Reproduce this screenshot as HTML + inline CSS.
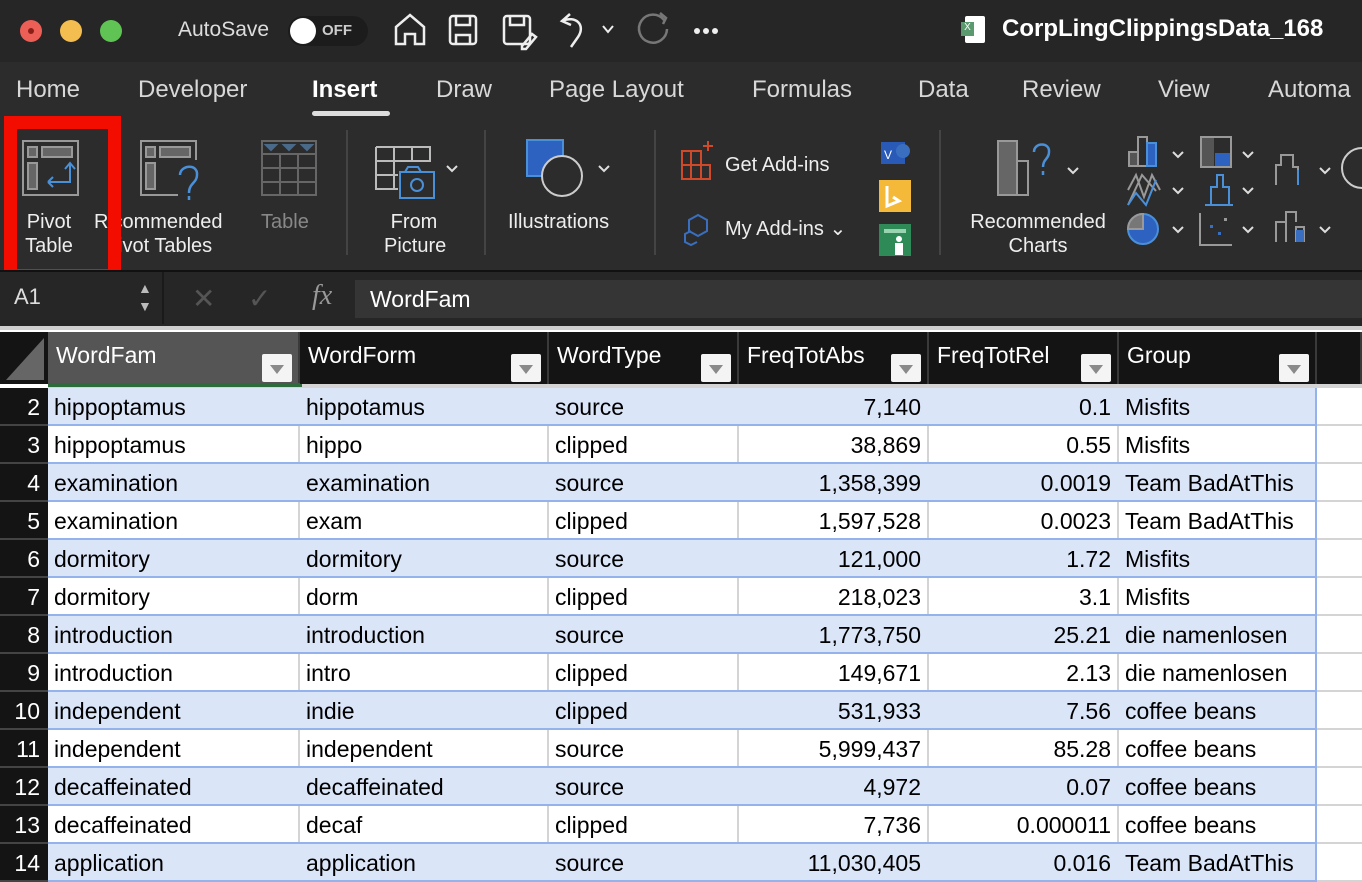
<!DOCTYPE html>
<html><head><meta charset="utf-8"><style>
*{margin:0;padding:0;box-sizing:border-box}
body{width:1362px;height:858px;overflow:hidden;background:#fff;font-family:"Liberation Sans",sans-serif;position:relative}
.a{position:absolute}
.top{left:0;top:0;width:1362px;height:62px;background:#262626}
.rib{left:0;top:62px;width:1362px;height:208px;background:#2c2c2c}
.tab{position:absolute;top:76px;color:#d8d8d8;font-size:24px}
.rt{position:absolute;color:#eee;font-size:20px;text-align:center;line-height:24px}
.fb{left:0;top:270px;width:1362px;height:56px;background:#262626;border-top:2px solid #111}
.grid{left:0;top:326px;width:1362px;height:532px;background:#fff;border-top:4px solid #cfcfcf}
.hc{position:absolute;top:332px;height:52px;background:#141414;color:#fff;font-size:23px;padding:10px 0 0 8px;border-right:2px solid #3a3a3a}
.dd{position:absolute;right:6px;bottom:2px;width:30px;height:28px;background:#f4f4f4;border-radius:2px}
.dd:after{content:"";position:absolute;left:8px;top:11px;border-left:7px solid transparent;border-right:7px solid transparent;border-top:9px solid #8a8a8a}
.rh{position:absolute;left:0;width:48px;background:#141414;color:#fff;font-size:23px;text-align:right;padding-right:8px;height:38px;line-height:38px;border-bottom:2px solid #444}
.row{position:absolute;left:48px;width:1269px;height:38px;font-size:23px;color:#000;line-height:38px;border-bottom:2px solid #94b3ec}
.c{position:absolute;top:0;height:36px;padding:0 6px;white-space:nowrap;border-right:2px solid #d4d4d4}
.r{text-align:right}
</style></head><body>
<div class="a top"></div>
<div class="a" style="left:20px;top:20px;width:22px;height:22px;border-radius:50%;background:#ec5f57"></div>
<div class="a" style="left:28px;top:28px;width:6px;height:6px;border-radius:50%;background:#8a1f18"></div>
<div class="a" style="left:60px;top:20px;width:22px;height:22px;border-radius:50%;background:#f3bd4f"></div>
<div class="a" style="left:100px;top:20px;width:22px;height:22px;border-radius:50%;background:#5fc454"></div>
<div class="a" style="left:178px;top:18px;color:#ddd;font-size:21px">AutoSave</div>
<div class="a" style="left:288px;top:16px;width:80px;height:30px;border-radius:15px;background:#1c1c1c"></div>
<div class="a" style="left:290px;top:18px;width:26px;height:26px;border-radius:50%;background:#fff"></div>
<div class="a" style="left:322px;top:22px;color:#ccc;font-size:15px;font-weight:bold">OFF</div>
<div class="a rib"></div>

<svg class="a" style="left:0;top:0" width="1362" height="270" fill="none" stroke-width="2">
<g stroke="#eee" stroke-width="2.5">
<path d="M396 44V27L410 15L424 27V44H415V34H405V44Z"/>
<rect x="450" y="16" width="26" height="28" rx="3"/><path d="M456 16v9h14V16M456 44v-9h14v9"/>
<rect x="504" y="16" width="26" height="28" rx="3"/><path d="M510 16v9h14V16M522 46l10-12 4 3-10 12h-4z"/>
<path d="M570 14l-8 7 9 4M562 21c14-6 24 4 16 16l-7 10"/>
<path d="M603 26l5 6 5-6" stroke-width="2"/>
<path d="M664 20a14 14 0 1 0 3 9M660 13l6 5-3 6" stroke="#777"/>
</g>
<circle cx="697" cy="31" r="3" fill="#eee"/><circle cx="706" cy="31" r="3" fill="#eee"/><circle cx="715" cy="31" r="3" fill="#eee"/>
<!-- pivot -->
<rect x="23" y="141" width="55" height="54" stroke="#999"/><rect x="28" y="147" width="9" height="10" fill="#666" stroke="#999"/><rect x="42" y="147" width="30" height="10" fill="#666" stroke="#999"/><rect x="28" y="163" width="9" height="26" fill="#666" stroke="#999"/>
<path d="M48 182h22V164M65 169l5-6 5 6M48 182l5-5M48 182l5 5" stroke="#4a90d9"/>
<!-- rec pivot -->
<rect x="141" y="141" width="55" height="54" stroke="#999"/><rect x="146" y="147" width="9" height="10" fill="#666" stroke="#999"/><rect x="160" y="147" width="30" height="10" fill="#666" stroke="#999"/><rect x="146" y="163" width="9" height="26" fill="#666" stroke="#999"/>
<rect x="178" y="160" width="22" height="40" fill="#2c2c2c" stroke="none"/>
<path d="M180 175c0-10 18-12 17 0c0 8-8 8-8 18M189 196v4" stroke="#4a90d9" stroke-width="2.5"/>
<!-- table -->
<rect x="262" y="141" width="54" height="54" stroke="#666"/><path d="M262 154h54M262 168h54M262 182h54M280 154v41M298 154v41" stroke="#666"/>
<path d="M266 145l5 5 5-5zM284 145l5 5 5-5zM302 145l5 5 5-5z" fill="#4a6a8a" stroke="#4a6a8a"/>
<!-- from picture -->
<path d="M376 147h54v15M376 147v42h22M376 161h54M376 175h22M394 147v42M412 147v15" stroke="#bbb"/>
<path d="M400 172h34v26h-34zM405 172l3-5h10l3 5" stroke="#4a90d9"/><circle cx="417" cy="185" r="6" stroke="#4a90d9"/>
<path d="M447 166l5 5 5-5M599 166l5 5 5-5M1068 168l5 5 5-5M1173 152l5 5 5-5M1243 152l5 5 5-5M1320 168l5 5 5-5M1173 188l5 5 5-5M1243 188l5 5 5-5M1173 227l5 5 5-5M1243 227l5 5 5-5M1320 227l5 5 5-5" stroke="#ddd"/>
<path d="M347 130v125M485 130v125M655 130v125M940 130v125" stroke="#444"/>
<!-- illustrations -->
<rect x="527" y="140" width="36" height="36" fill="#2d62c0" stroke="#4a90d9"/><circle cx="562" cy="176" r="20" fill="#2c2c2c" stroke="#ccc"/>
<!-- add-ins -->
<path d="M682 151h19v28h-19zM682 165h28v14h-9M691 151v28M703 146h10M708 141v10" stroke="#d04a2a"/>
<path d="M698 215l9 5v11l-9 5-9-5v-11zM691 231l-6 3v8l6 3 6-3" stroke="#3a6fc0"/>
<rect x="881" y="142" width="24" height="22" fill="#2a5ab8" stroke="none"/><circle cx="903" cy="151" r="7" fill="#3a6fc0"/>
<text x="884" y="159" fill="#fff" font-size="12" font-family="Liberation Sans" stroke="none">V</text>
<rect x="879" y="180" width="32" height="32" fill="#f5b93a" stroke="none"/><path d="M887 186v20l12-5-6-4" stroke="#fff" stroke-width="3"/>
<rect x="879" y="224" width="32" height="32" fill="#2e8b57" stroke="none"/><rect x="884" y="229" width="22" height="4" fill="#9ad3b0"/><circle cx="899" cy="239" r="3" fill="#fff"/><rect x="895" y="243" width="8" height="12" fill="#fff"/>
<!-- rec charts -->
<rect x="998" y="141" width="19" height="54" fill="#666" stroke="#999"/><rect x="1017" y="161" width="11" height="34" stroke="#999"/>
<path d="M1034 152c0-10 16-10 15 0c0 7-6 7-6 15M1043 171v4" stroke="#4a90d9" stroke-width="2.5"/>
<rect x="1129" y="152" width="9" height="14" fill="#555" stroke="#999"/><rect x="1138" y="137" width="9" height="29" stroke="#999"/><rect x="1147" y="143" width="9" height="23" fill="#2d62c0" stroke="#4a90d9"/>
<rect x="1201" y="137" width="30" height="30" stroke="#999"/><rect x="1202" y="138" width="12" height="28" fill="#555"/><rect x="1215" y="153" width="15" height="13" fill="#2d62c0"/>
<path d="M1128 190l8-15 8 22 8-22 8 15M1128 205l14-30 14 16" stroke="#999"/><path d="M1128 205l8-12 10 12 10-25" stroke="#4a90d9"/>
<path d="M1211 205v-18h6v-12h6v12h6v18zM1205 205h28" stroke="#4a90d9"/>
<circle cx="1143" cy="229" r="15" fill="#2d62c0" stroke="#4a90d9"/><path d="M1143 229v-15a15 15 0 0 0-15 15z" fill="#777" stroke="#999"/>
<path d="M1200 213v32h32" stroke="#999"/><rect x="1210" y="225" width="3" height="3" fill="#3a6fc0"/><rect x="1218" y="232" width="3" height="3" fill="#3a6fc0"/><rect x="1224" y="218" width="3" height="3" fill="#999"/>
<path d="M1276 185v-20h5v-10h12v12h5v18" stroke="#999"/><path d="M1298 170v15" stroke="#4a90d9"/>
<path d="M1276 242v-20h10v-10h10v10M1286 242v-20M1296 242v-15h8v15" stroke="#999"/><rect x="1296" y="230" width="8" height="12" fill="#3a6fc0"/>
<path d="M1362 148a20 20 0 0 0 0 40" stroke="#ccc"/>
</svg>
<div class="a" style="left:965px;top:16px;width:20px;height:27px;background:#fff;border-radius:2px"></div>
<div class="a" style="left:961px;top:22px;width:13px;height:14px;background:#5a9a6e;color:#fff;font-size:10px;text-align:center">X</div>
<div class="a" style="left:1002px;top:15px;color:#fff;font-size:24px;font-weight:bold;white-space:nowrap">CorpLingClippingsData_168</div>

<div class="tab" style="left:16px">Home</div>
<div class="tab" style="left:138px">Developer</div>
<div class="tab" style="left:312px;color:#fff;font-weight:bold">Insert</div>
<div class="a" style="left:312px;top:111px;width:78px;height:5px;border-radius:3px;background:#ddd"></div>
<div class="tab" style="left:436px">Draw</div>
<div class="tab" style="left:549px">Page Layout</div>
<div class="tab" style="left:752px">Formulas</div>
<div class="tab" style="left:918px">Data</div>
<div class="tab" style="left:1022px">Review</div>
<div class="tab" style="left:1158px">View</div>
<div class="tab" style="left:1268px">Automa</div>

<div class="a" style="left:4px;top:116px;width:117px;height:166px;border:13px solid #f20d00"></div>
<div class="rt" style="left:19px;top:210px;width:60px">Pivot<br>Table</div>
<div class="rt" style="left:94px;top:210px;width:150px;text-align:left">R<span style="display:inline-block;width:4px"></span>commended<br><span style="margin-left:24px">ivot Tables</span></div>
<div class="a" style="left:92px;top:232px;width:28px;height:26px;background:#2c2c2c"></div>
<div class="a" style="left:4px;top:116px;width:117px;height:166px;border:13px solid #f20d00"></div>
<div class="rt" style="left:261px;top:210px;color:#888">Table</div>
<div class="rt" style="left:384px;top:210px;width:60px">From<br>Picture</div>
<div class="rt" style="left:508px;top:210px">Illustrations</div>
<div class="rt" style="left:725px;top:153px">Get Add-ins</div>
<div class="rt" style="left:725px;top:217px">My Add-ins &#8964;</div>
<div class="rt" style="left:962px;top:210px;width:152px">Recommended<br>Charts</div>

<div class="a fb"></div>
<div class="a" style="left:14px;top:284px;color:#ddd;font-size:22px">A1</div>
<div class="a" style="left:138px;top:279px;color:#bbb;font-size:14px;line-height:18px">▲<br>▼</div>
<div class="a" style="left:162px;top:272px;width:2px;height:52px;background:#1a1a1a"></div>
<div class="a" style="left:192px;top:282px;color:#555;font-size:28px">✕</div>
<div class="a" style="left:248px;top:282px;color:#555;font-size:28px">✓</div>
<div class="a" style="left:312px;top:280px;color:#999;font-size:28px;font-style:italic;font-family:'Liberation Serif',serif">fx</div>
<div class="a" style="left:355px;top:280px;width:1007px;height:38px;background:#353535;color:#fff;font-size:23px;padding:6px 15px">WordFam</div>

<div class="a grid"></div>
<div class="a" style="left:0;top:332px;width:48px;height:52px;background:#141414"></div>
<svg class="a" style="left:4px;top:336px" width="42" height="46"><path d="M40 2V44H2Z" fill="#666"/></svg>
<div class="a" style="left:48px;top:384px;width:1314px;height:4px;background:#d4d4d4"></div>
<div class="hc" style="left:48px;width:252px;background:#555">WordFam<span class="dd"></span></div>
<div class="a" style="left:48px;top:383px;width:254px;height:4px;background:#2e6b3c"></div>
<div class="hc" style="left:300px;width:249px">WordForm<span class="dd"></span></div>
<div class="hc" style="left:549px;width:190px">WordType<span class="dd"></span></div>
<div class="hc" style="left:739px;width:190px">FreqTotAbs<span class="dd"></span></div>
<div class="hc" style="left:929px;width:190px">FreqTotRel<span class="dd"></span></div>
<div class="hc" style="left:1119px;width:198px">Group<span class="dd"></span></div>
<div class="hc" style="left:1317px;width:45px"></div>

<div id="rows"></div>
<script>
var d=[["hippoptamus","hippotamus","source","7,140","0.1","Misfits"],["hippoptamus","hippo","clipped","38,869","0.55","Misfits"],["examination","examination","source","1,358,399","0.0019","Team BadAtThis"],["examination","exam","clipped","1,597,528","0.0023","Team BadAtThis"],["dormitory","dormitory","source","121,000","1.72","Misfits"],["dormitory","dorm","clipped","218,023","3.1","Misfits"],["introduction","introduction","source","1,773,750","25.21","die namenlosen"],["introduction","intro","clipped","149,671","2.13","die namenlosen"],["independent","indie","clipped","531,933","7.56","coffee beans"],["independent","independent","source","5,999,437","85.28","coffee beans"],["decaffeinated","decaffeinated","source","4,972","0.07","coffee beans"],["decaffeinated","decaf","clipped","7,736","0.000011","coffee beans"],["application","application","source","11,030,405","0.016","Team BadAtThis"]];
var L=[0,252,501,691,881,1071],W=[252,249,190,190,190,198],h="";
d.forEach(function(r,i){var y=388+i*38;
h+='<div class="rh" style="top:'+y+'px">'+(i+2)+'</div><div class="row" style="top:'+y+'px;background:'+(i%2?'#fff':'#dae5f8')+'">';
r.forEach(function(t,j){h+='<div class="c'+(j==3||j==4?' r':'')+'" style="left:'+L[j]+'px;width:'+W[j]+'px;'+(i%2?'':'border-right-color:transparent;')+(j==5?'border-right:2px solid #94b3ec':'')+'">'+t+'</div>'});
h+='</div><div class="a" style="left:1317px;top:'+y+'px;width:45px;height:38px;border-bottom:2px solid #d4d4d4;background:#fff"></div>';});
document.getElementById('rows').innerHTML=h;
</script>
</body></html>
